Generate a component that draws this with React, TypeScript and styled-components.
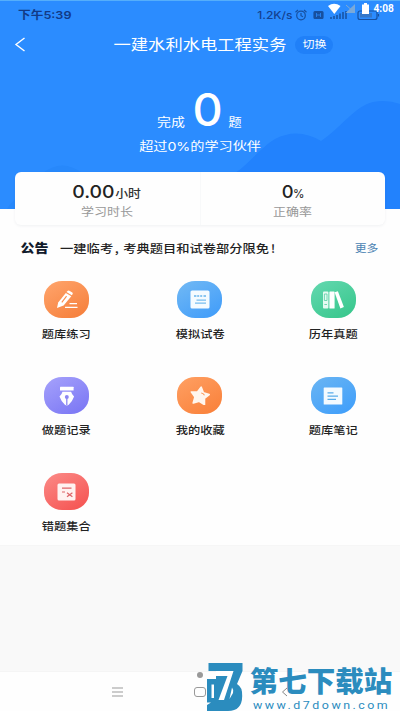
import React from "react";
import styled, { createGlobalStyle } from "styled-components";

const Global = createGlobalStyle`
  * { box-sizing: border-box; }
  body { margin: 0; background: #fff; overflow: hidden; font-family: "Noto Sans", "Noto Sans CJK SC", sans-serif; }
  svg { display: block; flex: none; }
`;

const Screen = styled.div`
  position: relative;
  width: 400px;
  height: 711px;
  display: flex;
  flex-direction: column;
  overflow: hidden;
  background: #fefefe;
`;

/* Text set in a box of known width, widened horizontally. */
const TextBox = styled.span<{ $w: number; $h: number }>`
  display: flex;
  flex: none;
  align-items: center;
  justify-content: center;
  width: ${(p) => p.$w}px;
  height: ${(p) => p.$h}px;
`;
const WideGlyphs = styled.span<{ $size: number; $x: number; $color: string; $weight: number; $font?: string; $spacing: number }>`
  flex: none;
  white-space: nowrap;
  line-height: 1;
  font-size: ${(p) => p.$size}px;
  font-weight: ${(p) => p.$weight};
  color: ${(p) => p.$color};
  letter-spacing: ${(p) => p.$spacing}px;
  font-family: ${(p) => (p.$font ? `"${p.$font}", ` : "")}"Noto Sans CJK SC", sans-serif;
  transform: scaleX(${(p) => p.$x});
`;
type WideProps = { w: number; h?: number; size: number; x?: number; color?: string; weight?: number; font?: string; spacing?: number; children: React.ReactNode };
const Wide = ({ w, h = 16, size, x = 1.18, color = "#fff", weight = 400, font, spacing = 0, children }: WideProps) => (
  <TextBox $w={w} $h={h}>
    <WideGlyphs $size={size} $x={x} $color={color} $weight={weight} $font={font} $spacing={spacing}>{children}</WideGlyphs>
  </TextBox>
);

const Hero = styled.header`
  position: relative;
  flex: none;
  height: 209px;
  background: #2b8cff;
  border-top: 1px solid #55aefb;
`;
const Hills = styled.svg`
  position: absolute;
  left: 0;
  top: -1px;
`;
const HeroContent = styled.div`
  position: relative;
  display: flex;
  flex-direction: column;
  align-items: center;
`;
const StatusBar = styled.div`
  width: 100%;
  height: 27px;
  display: flex;
  justify-content: space-between;
  padding: 6px 17px 0 18px;
`;
const StatusTime = styled.div`
  margin-top: 1px;
`;
const StatusIcons = styled.div`
  display: flex;
  align-items: center;
  height: 16px;
`;
const SystemOverlay = styled.div`
  position: absolute;
  z-index: 2;
  top: 2px;
  right: 6px;
  height: 14px;
  display: flex;
  align-items: center;
`;
const TitleBar = styled.div`
  width: 100%;
  height: 33px;
  display: flex;
  align-items: center;
  padding-left: 14px;
`;
const Title = styled.div`
  margin-left: 87px;
`;
const SwitchButton = styled.button`
  width: 38px;
  height: 18px;
  margin-left: 8px;
  padding: 0;
  border: 0;
  border-radius: 9px;
  background: #2080f8;
  display: flex;
  align-items: center;
  justify-content: center;
`;
const Done = styled.div`
  display: flex;
  align-items: flex-end;
  height: 43px;
  margin-top: 26px;
`;
const DoneValue = styled.div`
  margin: 0 6px 0 7px;
`;
const Beat = styled.div`
  margin-top: 9px;
`;

const Card = styled.section`
  position: relative;
  flex: none;
  display: flex;
  width: 370px;
  height: 53px;
  margin: -37px 0 0 15px;
  border-radius: 6px;
  background: #fefefe;
  box-shadow: 0 1px 3px rgba(80, 90, 110, 0.08);
`;
const Stat = styled.div`
  flex: 1;
  display: flex;
  flex-direction: column;
  align-items: center;
  padding-top: 12px;
  & + & { border-left: 1px solid #f8f9fa; }
`;
const StatValue = styled.div`
  display: flex;
  align-items: flex-end;
  height: 17px;
`;
const StatLabel = styled.div`
  margin-top: 3px;
`;

const Notice = styled.section`
  flex: none;
  height: 46px;
  display: flex;
  align-items: center;
  padding: 1px 22px 0 21px;
`;
const NoticeText = styled.div`
  display: flex;
  margin-left: 11px;
`;
const More = styled.div`
  margin-left: auto;
`;

const Menu = styled.main`
  flex: none;
  height: 274px;
  display: grid;
  grid-template-columns: repeat(3, 1fr);
  grid-auto-rows: 96.2px;
  padding-top: 10px;
`;
const MenuItem = styled.div`
  display: flex;
  flex-direction: column;
  align-items: center;
`;
const Pill = styled.div<{ $from: string; $to: string }>`
  width: 45px;
  height: 37px;
  border-radius: 18px / 17px;
  background: linear-gradient(150deg, ${(p) => p.$from}, ${(p) => p.$to});
  display: flex;
  align-items: center;
  justify-content: center;
  margin-bottom: 8px;
`;
const Filler = styled.div`
  flex: none;
  height: 127px;
  background: #f9f9f9;
  border-top: 1px solid #f6f6f6;
  border-bottom: 1px solid #f5f5f5;
`;
const NavBar = styled.nav`
  flex: 1;
  display: flex;
  align-items: center;
  padding: 0 0 0 111px;
`;
const HomeKey = styled.div`
  width: 12px;
  height: 10px;
  margin-left: 70px;
  border: 1.3px solid #999;
  border-radius: 3px;
`;
const BackKey = styled.div`
  position: relative;
  z-index: 2;
  margin-left: 75px;
`;
const HomeDot = styled.div`
  position: absolute;
  left: 197px;
  top: 672px;
  width: 6px;
  height: 6px;
  border-radius: 50%;
  background: #999;
`;
const Watermark = styled.div`
  position: absolute;
  left: 206px;
  top: 662px;
  display: flex;
`;
const WatermarkText = styled.div`
  display: flex;
  flex-direction: column;
  margin-left: 7px;
`;

const icons: Record<string, React.ReactNode> = {
  pencil: (
    <svg width="22" height="20" viewBox="0 0 22 20" fill="#fff">
      <path d="M1 18 2.200 12.600 9.800 3 15.300 6.200 7.600 15.600Z" />
      <path d="m10.500 2.100 1-1.200q.8-.7 1.800-.1l3 1.800q.9.700.2 1.700l-.7 1Z" />
      <path d="M10.600 6.200 5.800 12.300" stroke="#f98c4d" strokeWidth="1.100" />
      <path d="M13.500 13.600H21M9 17.400h12.500" stroke="#fff" strokeWidth="1.300" />
    </svg>
  ),
  paper: (
    <svg width="20" height="19" viewBox="0 0 20 19">
      <rect x=".5" y=".5" width="19" height="18" rx="1.6" fill="#f5fbff" />
      <path d="M4 6h2.400M7.200 6h2M10.200 6h2M13.500 6H16" stroke="#8ac6f1" strokeWidth="2" />
      <path d="M6.500 10.200H16M5 13.200h11" stroke="#77bdf0" strokeWidth="1.300" />
    </svg>
  ),
  books: (
    <svg width="22" height="18" viewBox="0 0 22 18">
      <rect x="1" y=".5" width="5.400" height="17" rx="1" fill="#e5faf2" />
      <path d="M2.400 3h2.600v6.500H2.400zM2.400 13.500h2.600" stroke="#63d3a8" strokeWidth=".9" fill="none" />
      <rect x="7.400" y=".5" width="5.200" height="17" rx=".6" fill="#fff" />
      <path d="m12.600 1.300 3.300-1.100 6 15.900-3.500 1.400Z" fill="#fff" />
    </svg>
  ),
  pen: (
    <svg width="16" height="20" viewBox="0 0 16 20">
      <rect x="1" y=".8" width="13.600" height="3.600" rx=".5" fill="#fff" />
      <path d="M3.500 5.700h8.600q.5 2.300 3 4.800-1.500 4.600-5.400 8.200l-1.900 1-1.900-1Q2 15.100.5 10.500 3 8 3.500 5.700Z" fill="#fff" />
      <circle cx="7.800" cy="11" r="2" fill="#8c88f2" />
      <path d="M7.800 11v8.500" stroke="#8c88f2" strokeWidth="1.300" />
    </svg>
  ),
  star: (
    <svg width="20" height="19" viewBox="0 0 20 19">
      <path transform="rotate(8 10 9.500)" d="m10 1.200 2.900 5.200 6 .9-4.200 4.300.9 6.200-5.600-2.600-5.600 2.600.9-6.200L1.100 7.300l6-.9Z" fill="#fff6ee" stroke="#fff6ee" strokeWidth="1.800" strokeLinejoin="round" />
      <path d="M11.200 7q2 .2 3.300 2.300" stroke="#fb9a5c" fill="none" strokeWidth="1.100" />
    </svg>
  ),
  note: (
    <svg width="20" height="18" viewBox="0 0 20 18">
      <rect x=".7" y=".5" width="18.600" height="17" rx=".6" fill="#f3faff" />
      <path d="M4.500 5.800h6M4.500 9.100h10.500M4.500 12.300h8.500" stroke="#58abea" strokeWidth="1.300" />
    </svg>
  ),
  wrong: (
    <svg width="19" height="18" viewBox="0 0 19 18">
      <rect x=".5" y=".5" width="18" height="17" rx="1.500" fill="#fff2f1" />
      <path d="M5 5.200h9.500M5 9h3M10 9.800l5.400 4M15.400 9.800l-5.400 4" stroke="#dd6468" strokeWidth="1.200" />
    </svg>
  ),
};

const items = [
  { label: "题库练习", icon: "pencil", from: "#ffa56d", to: "#f57d38" },
  { label: "模拟试卷", icon: "paper", from: "#72b9f4", to: "#3e9bfa" },
  { label: "历年真题", icon: "books", from: "#64d8b0", to: "#35c68a" },
  { label: "做题记录", icon: "pen", from: "#a6a2fb", to: "#7874f4" },
  { label: "我的收藏", icon: "star", from: "#ffa063", to: "#f97f38" },
  { label: "题库笔记", icon: "note", from: "#6ab5f3", to: "#3d9dfb" },
  { label: "错题集合", icon: "wrong", from: "#fb8b88", to: "#f5504e" },
];

export default function App() {
  return (
    <Screen>
      <Global />
      <Hero>
        <Hills width="400" height="209" viewBox="0 0 400 209" fill="#2282fd">
          <path d="M235 173C250 163 260 148 275 139Q298 127 321 141C342 127 355 106 373 102Q387 99 400 104V209H235Z" />
          <path d="M43 173Q62 158 82 173ZM7 209Q13 199 20 197V209Z" fill="#2788fb" />
        </Hills>
        <HeroContent>
          <StatusBar>
            <StatusTime><Wide w={54} size={10.800} x={1.170} color="#123a86" weight={600} font="Inter">下午5:39</Wide></StatusTime>
            <StatusIcons>
              <Wide w={36} size={10.200} x={1.180} color="#14418f" weight={500} font="Inter">1.2K/s</Wide>
              <svg width="90" height="14" viewBox="0 0 90 14" fill="none" stroke="#17509f" strokeWidth="1.200">
                <circle cx="8" cy="7.500" r="4.300" />
                <path d="M8 5v2.700l2 1M2.500 4.200 5 2M11 2l2.500 2.200" />
                <rect x="21" y="3.500" width="9" height="7" rx="1" fill="#17509f" />
                <path d="M23.500 5v4M27.500 5v4M23.500 7h4" stroke="#2b8cff" strokeWidth=".8" />
                <path d="M38 11V9M41 11V8M44 11V7M47 11V5.500M50 11V4M53 11V3" strokeWidth="1.500" />
                <rect x="65" y="3" width="19" height="8.500" rx="2" />
                <path d="M85.500 6v2.500" />
                <path d="M67 5h12v4.500H67z" fill="#3477c9" stroke="none" />
              </svg>
            </StatusIcons>
          </StatusBar>
          <TitleBar>
            <svg width="12" height="16" viewBox="0 0 12 16" fill="none" stroke="#fff" strokeWidth="1.400"><path d="M10.500 1 2 7.500l8.500 6.500" /></svg>
            <Title><Wide w={174} h={20} size={14.600} x={1.185}>一建水利水电工程实务</Wide></Title>
            <SwitchButton><Wide w={24} size={10.500} x={1.140}>切换</Wide></SwitchButton>
          </TitleBar>
          <Done>
            <Wide w={28} size={12} x={1.160}>完成</Wide>
            <DoneValue><Wide w={30} h={41} size={45} x={1.040} weight={500} font="Inter">0</Wide></DoneValue>
            <Wide w={14} size={12} x={1.120}>题</Wide>
          </Done>
          <Beat><Wide w={122} size={12.100} x={1.170} font="Inter">超过0%的学习伙伴</Wide></Beat>
        </HeroContent>
      </Hero>
      <SystemOverlay>
        <svg width="46" height="14" viewBox="0 0 46 14" fill="#fff">
          <path d="M0 4Q6-.5 12.500 4L6.300 12Z" />
          <path d="M27 2v9H17.500Z" fill="#7aa9d9" />
          <path d="m18 3 9 8" stroke="#80aad2" />
          <path d="M34 2.500h2V1h3v1.500h2V12h-7z" />
        </svg>
        <Wide w={20} h={14} size={10.600} x={0.950} weight={700} font="Roboto">4:08</Wide>
      </SystemOverlay>
      <Card>
        <Stat>
          <StatValue>
            <Wide w={42} h={18} size={17.800} x={1.090} color="#222" weight={500} font="Inter">0.00</Wide>
            <Wide w={27} h={15} size={11} x={1.170} color="#333" weight={500}>小时</Wide>
          </StatValue>
          <StatLabel><Wide w={53} h={15} size={11} color="#999">学习时长</Wide></StatLabel>
        </Stat>
        <Stat>
          <StatValue>
            <Wide w={12} h={18} size={17.800} x={1.030} color="#222" weight={500} font="Inter">0</Wide>
            <Wide w={11} h={13} size={11.500} x={1} color="#333" weight={500} font="Inter">%</Wide>
          </StatValue>
          <StatLabel><Wide w={39} h={15} size={11} color="#999">正确率</Wide></StatLabel>
        </Stat>
      </Card>
      <Notice>
        <Wide w={28} size={12.500} x={1.120} color="#111a2b" weight={900}>公告</Wide>
        <NoticeText>
          <Wide w={53} size={11.300} color="#222" weight={500}>一建临考</Wide>
          <Wide w={8} size={11.300} color="#222" weight={500}>,</Wide>
          <Wide w={150} size={11.300} x={1.175} color="#222" weight={500}>考典题目和试卷部分限免</Wide>
          <Wide w={3} size={11.300} color="#222" weight={500}>!</Wide>
        </NoticeText>
        <More><Wide w={24} size={10.500} x={1.130} color="#4b83b3">更多</Wide></More>
      </Notice>
      <Menu>
        {items.map((item) => (
          <MenuItem key={item.label}>
            <Pill $from={item.from} $to={item.to}>{icons[item.icon]}</Pill>
            <Wide w={49} size={10.600} x={1.155} color="#222" weight={500}>{item.label}</Wide>
          </MenuItem>
        ))}
      </Menu>
      <Filler />
      <NavBar>
        <svg width="13" height="10" viewBox="0 0 13 10" stroke="#999" strokeWidth="1.200"><path d="M1 1h11M1 5h11M1 9h11" /></svg>
        <HomeKey />
        <BackKey><svg width="8" height="10" viewBox="0 0 8 10" fill="none" stroke="#888"><path d="M6 1 1.500 5 6 9" /></svg></BackKey>
      </NavBar>
      <HomeDot />
      <Watermark>
        <svg width="37" height="49" viewBox="0 0 37 49">
          <path d="M2.500 1H36.500V9L31 22Q36.500 25 36.200 34 36 49 22 49H1V43L5 40.500H1V17H10V9H2.500Z" fill="#2b8cbe" />
          <path d="M10 9H27.500L18 38H12.500L21.500 14H10Z" fill="#fff" />
          <path d="M5.500 22.500H8V36H5.500Z" fill="#fff" />
          <path d="M26 25.500Q27.500 27 27 31L23.500 37Z" fill="#fff" />
        </svg>
        <WatermarkText>
          <Wide w={142} h={37} size={28.500} x={1} color="#2b8cbe" weight={900}>第七下载站</Wide>
          <Wide w={144} h={13} size={11.500} x={1.080} color="#2b8cbe" font="Roboto" spacing={2.300}>www.d7down.com</Wide>
        </WatermarkText>
      </Watermark>
    </Screen>
  );
}
